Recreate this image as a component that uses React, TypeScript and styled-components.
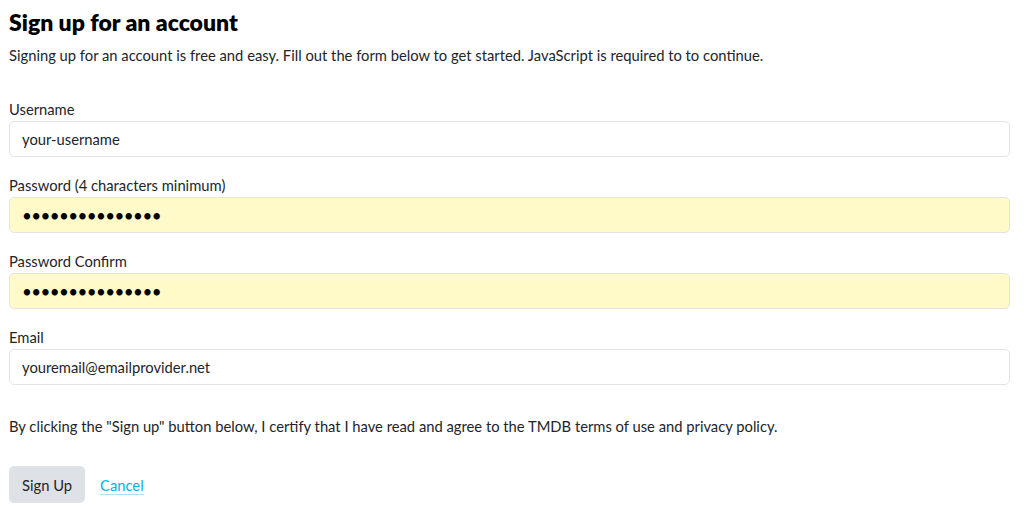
import React from "react";
import styled, { createGlobalStyle } from "styled-components";

const GlobalStyle = createGlobalStyle`
  body {
    margin: 0;
    background: #fff;
    font-family: Lato, "Open Sans", sans-serif;
    color: #000;
  }
`;

const Page = styled.div`
  padding: 8px 14px 0 9px;
`;

const Title = styled.h2`
  margin: 0;
  font-size: 23px;
  font-weight: 800;
  line-height: 28px;
`;

const Intro = styled.p`
  margin: 8px 0 0;
  font-size: 14.75px;
  line-height: 22px;
  color: #212529;
`;

const Form = styled.form`
  margin-top: 33px;
  display: flex;
  flex-direction: column;
`;

const Field = styled.div`
  display: flex;
  flex-direction: column;
  margin-bottom: 18px;
`;

const Label = styled.label`
  font-size: 14.75px;
  line-height: 20px;
  margin-bottom: 2px;
  color: #212529;
`;

const Input = styled.input<{ $filled?: boolean }>`
  box-sizing: border-box;
  height: 36px;
  width: 100%;
  padding: 0 12px;
  border: 1px solid #e3e3e3;
  border-radius: 5px;
  background: ${(p) => (p.$filled ? "#fffac8" : "#fff")};
  font-family: inherit;
  font-size: 14.75px;
  color: #212529;
  outline: none;

  &[type="password"] {
    font-size: 17px;
    letter-spacing: -0.6px;
    color: #000;
  }
`;

const Terms = styled.p`
  margin: 12px 0 0;
  font-size: 14.75px;
  line-height: 22px;
  color: #212529;
`;

const Actions = styled.div`
  display: flex;
  align-items: center;
  gap: 15px;
  margin-top: 29px;
`;

const Button = styled.button`
  height: 37px;
  padding: 0 13px;
  border: none;
  border-radius: 5px;
  background: #dee2e6;
  font-family: inherit;
  font-size: 14.75px;
  color: #212529;
`;

const CancelLink = styled.a`
  font-size: 14.75px;
  color: #01b4e4;
  text-decoration: underline;
  text-decoration-color: #a8e4f5;
  text-underline-offset: 3px;
`;

const App: React.FC = () => {
  const secret = "abcdefghijklmno";
  return (
    <Page>
      <GlobalStyle />
      <Title>Sign up for an account</Title>
      <Intro>
        Signing up for an account is free and easy. Fill out the form below to
        get started. JavaScript is required to to continue.
      </Intro>
      <Form onSubmit={(e) => e.preventDefault()}>
        <Field>
          <Label>Username</Label>
          <Input type="text" readOnly value="your-username" />
        </Field>
        <Field>
          <Label>Password (4 characters minimum)</Label>
          <Input type="password" readOnly value={secret} $filled />
        </Field>
        <Field>
          <Label>Password Confirm</Label>
          <Input type="password" readOnly value={secret} $filled />
        </Field>
        <Field>
          <Label>Email</Label>
          <Input type="text" readOnly value="youremail@emailprovider.net" />
        </Field>
      </Form>
      <Terms>
        By clicking the "Sign up" button below, I certify that I have read and
        agree to the TMDB terms of use and privacy policy.
      </Terms>
      <Actions>
        <Button type="button">Sign Up</Button>
        <CancelLink href="#">Cancel</CancelLink>
      </Actions>
    </Page>
  );
};

export default App;
